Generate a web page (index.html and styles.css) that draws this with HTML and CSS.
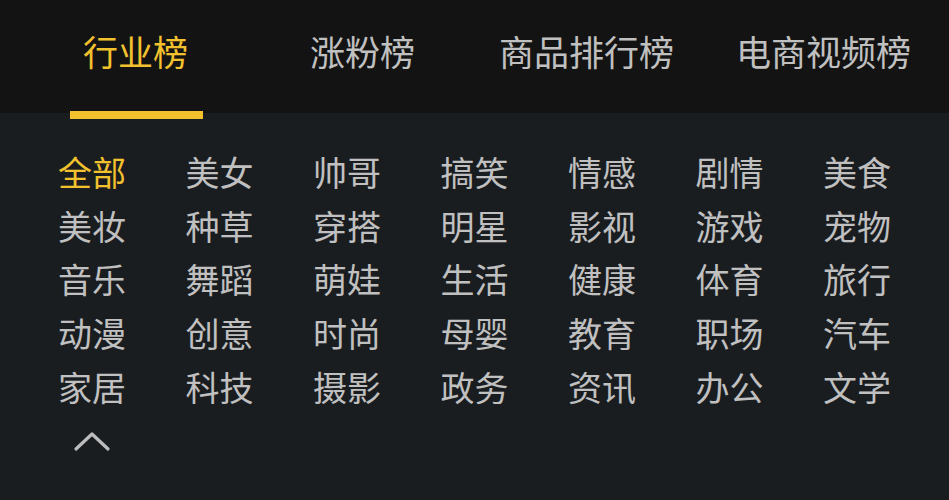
FILE: index.html
```html
<!DOCTYPE html>
<html lang="zh-CN">

<head>
    <meta charset="UTF-8">
    <meta name="viewport" content="width=device-width, initial-scale=1.0">
    <title>榜单</title>
    <link rel="stylesheet" href="styles.css">
</head>

<body>
    <div class="tabs">
        <div class="tab active">行业榜</div>
        <div class="tab">涨粉榜</div>
        <div class="tab">商品排行榜</div>
        <div class="tab">电商视频榜</div>
    </div>

    <div class="panel">
        <div class="category-grid">
            <span class="category selected">全部</span>
            <span class="category">美女</span>
            <span class="category">帅哥</span>
            <span class="category">搞笑</span>
            <span class="category">情感</span>
            <span class="category">剧情</span>
            <span class="category">美食</span>

            <span class="category">美妆</span>
            <span class="category">种草</span>
            <span class="category">穿搭</span>
            <span class="category">明星</span>
            <span class="category">影视</span>
            <span class="category">游戏</span>
            <span class="category">宠物</span>

            <span class="category">音乐</span>
            <span class="category">舞蹈</span>
            <span class="category">萌娃</span>
            <span class="category">生活</span>
            <span class="category">健康</span>
            <span class="category">体育</span>
            <span class="category">旅行</span>

            <span class="category">动漫</span>
            <span class="category">创意</span>
            <span class="category">时尚</span>
            <span class="category">母婴</span>
            <span class="category">教育</span>
            <span class="category">职场</span>
            <span class="category">汽车</span>

            <span class="category">家居</span>
            <span class="category">科技</span>
            <span class="category">摄影</span>
            <span class="category">政务</span>
            <span class="category">资讯</span>
            <span class="category">办公</span>
            <span class="category">文学</span>
        </div>

        <div class="collapse">
            <svg width="38" height="24" viewBox="0 0 38 24">
                <polyline points="3,20 19,5 35,20" fill="none" stroke="#bdbdbd" stroke-width="3.2" stroke-linecap="round" stroke-linejoin="round" />
            </svg>
        </div>
    </div>
</body>

</html>
```

FILE: styles.css
```css
body {
    margin: 0;
    padding: 0;
    background-color: #1a1d20;
    font-family: "Noto Sans CJK SC", "Noto Sans", sans-serif;
    color: #c0c0c0;
    height: 500px;
    overflow: hidden;
}

.tabs {
    display: flex;
    align-items: center;
    height: 113px;
    padding-left: 83px;
    background-color: #131313;
    box-sizing: border-box;
}

.tab {
    position: relative;
    font-size: 35px;
    line-height: 40px;
    color: #c0c0c0;
    white-space: nowrap;
    margin-top: -12px;
}

.tab:nth-child(2) {
    margin-left: 122px;
}

.tab:nth-child(3) {
    margin-left: 84px;
}

.tab:nth-child(4) {
    margin-left: 62px;
}

.tab.active {
    color: #f2c12e;
}

/* yellow indicator under the active tab */
.tab.active::after {
    content: "";
    position: absolute;
    left: -13px;
    right: -15px;
    top: 80px;
    height: 8px;
    background-color: #f2c12e;
}

.panel {
    padding: 32px 0 0 58px;
}

.category-grid {
    display: grid;
    grid-template-columns: repeat(7, 127.5px);
    grid-auto-rows: 53.75px;
    align-items: center;
}

.category {
    font-size: 34px;
    line-height: 40px;
    white-space: nowrap;
}

.category.selected {
    color: #f2c12e;
}

.collapse {
    margin: 15px 0 0 15px;
    width: 38px;
    height: 24px;
}

.collapse svg {
    display: block;
}
```
